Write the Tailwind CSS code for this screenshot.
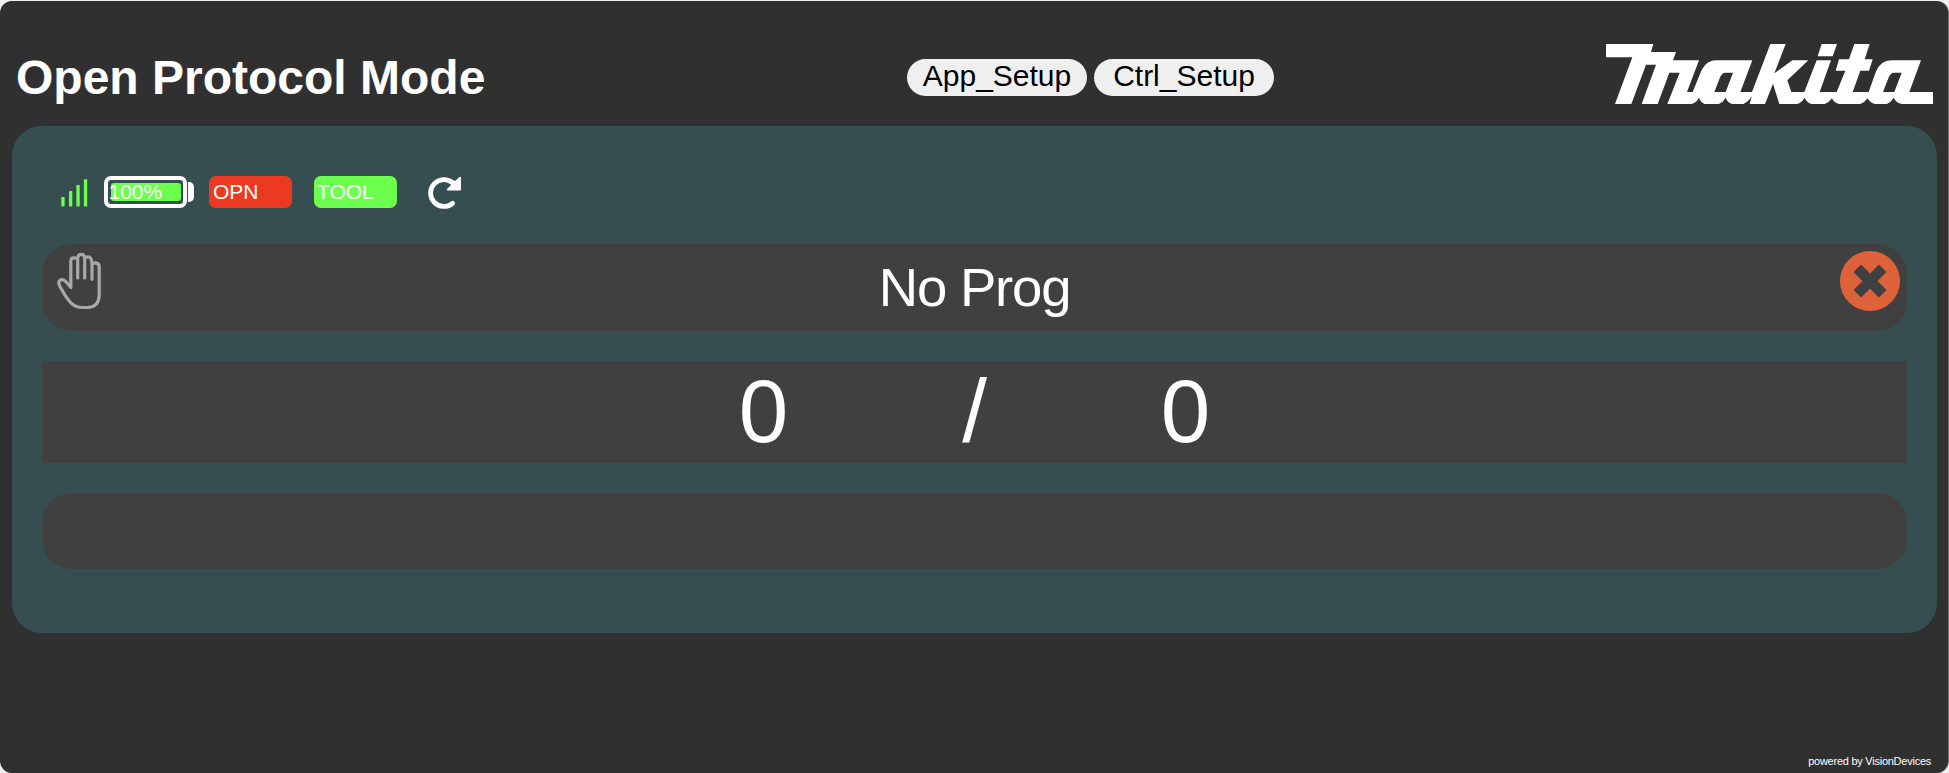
<!DOCTYPE html>
<html lang="en">
<head>
<meta charset="utf-8">
<title>Open Protocol Mode</title>
<script src="https://cdn.jsdelivr.net/npm/@tailwindcss/browser@4"></script>
</head>
<body class="h-[773px] overflow-hidden bg-[#f0f0f0] pt-px pr-px font-['Liberation_Sans',Arial,sans-serif] text-white">
<div class="flex h-[772px] flex-col rounded-xl bg-[#303030] pr-[11px] pl-3 shadow-[1px_0_0_#707070]">
  <header class="grid h-[125px] shrink-0 grid-cols-[895px_1fr_auto] items-start">
    <h1 class="pt-[49px] pl-1 text-[48px] leading-[55px] font-bold whitespace-nowrap">Open Protocol Mode</h1>
    <nav class="flex gap-[7px] pt-[58px] text-[30px] text-black">
      <button class="h-[37px] w-[180px] rounded-[20px] bg-[#efefef] pb-1 leading-[33px]">App_Setup</button>
      <button class="h-[37px] w-[180px] rounded-[20px] bg-[#efefef] pb-1 leading-[33px]">Ctrl_Setup</button>
    </nav>
    <svg class="mt-[43px] mr-1 h-[60px] w-[327px]" viewBox="48 42 981 180" preserveAspectRatio="none" fill="#fff" role="img" aria-label="Makita">
      <path d="M48 42H190L183 66H258L249 91H327L291 186H308L329 134Q345 91 378 91H487L451 186H486L541 42H587L553 130L607 91H655L592 151L604 186H643L680 91H723L689 186H740L766 122H737L747 88H777L793 42H839L824 88H848L837 122H811L788 186H836L857 127Q870 91 905 91H993L958 186H1029V222H936Q918 219 911 203Q904 216 890 222H854Q839 218 833 205Q825 216 811 222H747Q731 218 726 205Q718 217 704 222H665Q650 218 644 203Q637 216 622 222H568L549 161L525 222H479L485 199Q476 215 460 222H426Q412 217 407 203Q400 216 386 222H344Q332 217 327 203Q320 217 305 222H232L269 128H238L203 222H155L198 104H168L124 222H75L127 82H48Z"/>
      <path d="M695 42H741L728 79H683Z"/>
      <path fill="#303030" d="M406 128H429L407 186H373L389 145Q395 128 406 128ZM912 128H935L913 186H879L895 145Q901 128 912 128Z"/>
    </svg>
  </header>

  <main class="flex h-[507px] shrink-0 flex-col rounded-[30px] bg-[#374e50] px-[30px] pt-[50px]">
    <div class="flex h-8 items-start text-[21px] leading-8">
      <svg class="mt-[3px] ml-[19px] h-7 w-[27px]" viewBox="0 0 27 28" fill="#6dff4d">
        <rect x="0.3" y="18" width="3.3" height="9.6" rx="0.6"/><rect x="8" y="12" width="3.3" height="15.6" rx="0.6"/><rect x="15.4" y="6" width="3.3" height="21.6" rx="0.6"/><rect x="22.9" y="0.3" width="3.3" height="27.3" rx="0.6"/>
      </svg>
      <div class="ml-4 flex items-center gap-px">
        <div class="h-8 w-[83px] rounded-[7px] border-4 border-white p-[3px]">
          <div class="h-[18px] w-[70px] rounded-[3px] bg-[#6dff4d] leading-[18px]"><span class="-ml-[2.500px]">100%</span></div>
        </div>
        <div class="h-5 w-1.5 rounded-r-[5px] bg-white"></div>
      </div>
      <div class="ml-[15px] h-8 w-[83px] rounded-[7px] bg-[#eb3a21] pl-1">OPN</div>
      <div class="ml-[22px] h-8 w-[83px] rounded-[7px] bg-[#6dff4d] pl-[3px]">TOOL</div>
      <svg class="ml-[30px] h-[34px] w-[36px]" viewBox="0 0 36 34" fill="none">
        <path d="M25.600 27.300A13.400 13.400 0 1 1 25.600 6.800" stroke="#fff" stroke-width="4.800" stroke-linecap="round"/>
        <path d="M34 1.800V13.500Q34 14.500 33 14.500H21Q19 14.300 20.300 12.700L24.800 8.200L23.500 4.500L28.500 4.800L32 1.300Q34 0 34 1.800Z" fill="#fff"/>
      </svg>
    </div>

    <section class="mt-9 grid h-[87px] grid-cols-[80px_1fr_80px] rounded-[30px] bg-[#404040]">
      <svg class="mt-[8px] ml-[14px] h-[60px] w-[48px]" viewBox="0 0 48 60" fill="none" stroke="#a8a8a8" stroke-width="3.200" stroke-linecap="round" stroke-linejoin="round">
        <path d="M14.800 34.500V9.500Q14.800 5.800 18 5.800Q20.500 5.800 21.500 7Q22 2.400 25.100 2.400Q28.300 2.400 28.700 6Q29.500 4.800 32 4.800Q35.800 4.800 36 12Q37 10.800 39.500 10.800Q43.200 11 43.200 15V43.500Q42.700 55.200 31.500 55.500H26Q18.500 55 14.500 50.500Q10 45.500 4 34.500Q1.500 29.500 4.500 27.900Q7.500 26.800 10 29.800L15 35.500M21.700 8V26M28.700 7V26M36 12V27.300"/>
      </svg>
      <h2 class="text-center text-[54.500px] leading-[87px] tracking-[-1.2px]">No Prog</h2>
      <svg class="mt-[7px] ml-[13px] size-[60px]" viewBox="0 0 60 60">
        <circle cx="30" cy="30" r="30" fill="#de6239"/>
        <path d="M21 13.500L30 22.500L39 13.500L46.500 21L37.500 30L46.500 39L39 46.500L30 37.500L21 46.500L13.500 39L22.500 30L13.500 21Z" fill="#404040"/>
      </svg>
    </section>

    <section class="mt-[30px] flex h-[102px] justify-center bg-[#404040] text-center text-[89px] leading-[101px]">
      <span class="w-[211px]">0</span><span class="w-[211px]">/</span><span class="w-[211px]">0</span>
    </section>

    <section class="mt-[30px] h-[76px] rounded-[30px] bg-[#404040]"></section>
  </main>

  <footer class="mt-auto pr-[6px] pb-[6px] text-right text-[11px] leading-3 tracking-[-0.25px]">powered by VisionDevices</footer>
</div>
</body>
</html>
